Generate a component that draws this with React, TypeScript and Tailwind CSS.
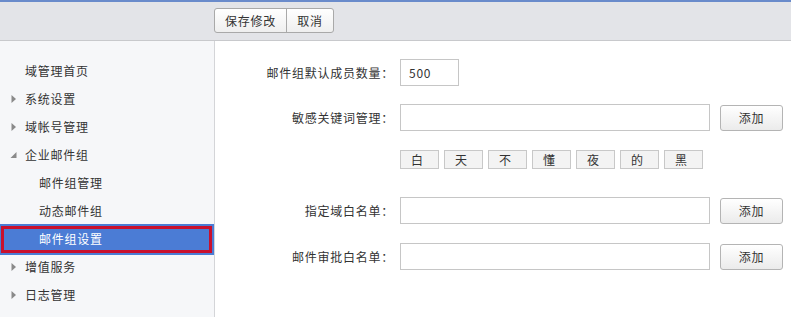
import React from 'react';

const FONT = '"Noto Sans CJK SC", "Liberation Sans", sans-serif';

type NavItem = { label: string; level: 0 | 1; arrow?: 'right' | 'down'; active?: boolean };

const NAV: NavItem[] = [
  { label: '域管理首页', level: 0 },
  { label: '系统设置', level: 0, arrow: 'right' },
  { label: '域帐号管理', level: 0, arrow: 'right' },
  { label: '企业邮件组', level: 0, arrow: 'down' },
  { label: '邮件组管理', level: 1 },
  { label: '动态邮件组', level: 1 },
  { label: '邮件组设置', level: 1, active: true },
  { label: '增值服务', level: 0, arrow: 'right' },
  { label: '日志管理', level: 0, arrow: 'right' },
];

const KEYWORDS = ['白', '天', '不', '懂', '夜', '的', '黑'];

const Arrow = ({ dir }: { dir: 'right' | 'down' }) =>
  dir === 'right' ? (
    <svg width="6" height="10" viewBox="0 0 6 10" className="absolute left-[11px] top-1/2 -translate-y-1/2">
      <path d="M0.5 1 L5 5 L0.5 9 Z" fill="#8a8a8a" />
    </svg>
  ) : (
    <svg width="7" height="7" viewBox="0 0 7 7" className="absolute left-[10px] top-1/2 -translate-y-1/2">
      <path d="M6.5 0.5 L6.5 6.5 L0.5 6.5 Z" fill="#8a8a8a" />
    </svg>
  );

const SideNav = () => (
  <div className="w-[215px] shrink-0 bg-[#f6f7f9] border-r border-[#d4d5d8] pt-[16px]">
    {NAV.map((item) =>
      item.active ? (
        <div key={item.label} className="h-[31px] -my-[1.5px] bg-[#4b7cd5] pl-[1px] pr-[2px] py-[2px] flex">
          <div className="flex-1 border-[3px] border-[#c9102d] flex items-center pl-[35px] text-white">
            {item.label}
          </div>
        </div>
      ) : (
        <div
          key={item.label}
          className={
            'relative h-[28px] flex items-center text-[#333] ' + (item.level === 0 ? 'pl-[25px]' : 'pl-[39px]')
          }
        >
          {item.arrow && <Arrow dir={item.arrow} />}
          {item.label}
        </div>
      )
    )}
  </div>
);

const Label = ({ children }: { children: React.ReactNode }) => (
  <div className="w-[185px] text-right pr-[6px] text-[#333]">{children}</div>
);

const TextInput = ({ value, width }: { value?: string; width: string }) => (
  <input
    readOnly
    value={value ?? ''}
    className={'h-[27px] border border-[#c6c6c6] bg-white px-[8px] text-[#333] outline-none ' + width}
    style={{ fontFamily: FONT, fontSize: 12 }}
  />
);

const AddButton = () => (
  <button className="ml-[10px] h-[26px] w-[63px] rounded-[3px] border border-[#b4b4b4] bg-gradient-to-b from-white to-[#ebebeb] text-[#333]">
    添加
  </button>
);

export default function App() {
  return (
    <div
      className="w-[791px] h-[317px] overflow-hidden bg-white text-[12px] tracking-[0.75px] flex flex-col"
      style={{ fontFamily: FONT }}
    >
      <div className="h-[41px] shrink-0 bg-[#e3e4e8] border-t-2 border-[#6a8bcb] border-b border-b-[#c8c9cc] pl-[214px] pt-[6px]">
        <div className="flex h-[25px] rounded-[3px] border border-[#a9a9a9] w-fit bg-gradient-to-b from-white to-[#efefef] overflow-hidden">
          <button className="w-[72px] border-r border-[#a9a9a9] text-[#333]">保存修改</button>
          <button className="w-[46px] text-[#333]">取消</button>
        </div>
      </div>
      <div className="flex flex-1">
        <SideNav />
        <div className="flex-1 flex flex-col">
          <div className="mt-[18px] flex items-center">
            <Label>邮件组默认成员数量：</Label>
            <TextInput value="500" width="w-[59px]" />
          </div>
          <div className="mt-[18px] flex items-center">
            <Label>敏感关键词管理：</Label>
            <TextInput width="w-[310px]" />
            <AddButton />
          </div>
          <div className="mt-[19px] ml-[185px] flex gap-[5px]">
            {KEYWORDS.map((k) => (
              <div
                key={k}
                className="h-[19px] w-[39px] border border-[#c8c8c8] bg-[#f3f3f3] pl-[10px] flex items-center text-[#333]"
              >
                {k}
              </div>
            ))}
          </div>
          <div className="mt-[28px] flex items-center">
            <Label>指定域白名单：</Label>
            <TextInput width="w-[310px]" />
            <AddButton />
          </div>
          <div className="mt-[19px] flex items-center">
            <Label>邮件审批白名单：</Label>
            <TextInput width="w-[310px]" />
            <AddButton />
          </div>
        </div>
      </div>
    </div>
  );
}
